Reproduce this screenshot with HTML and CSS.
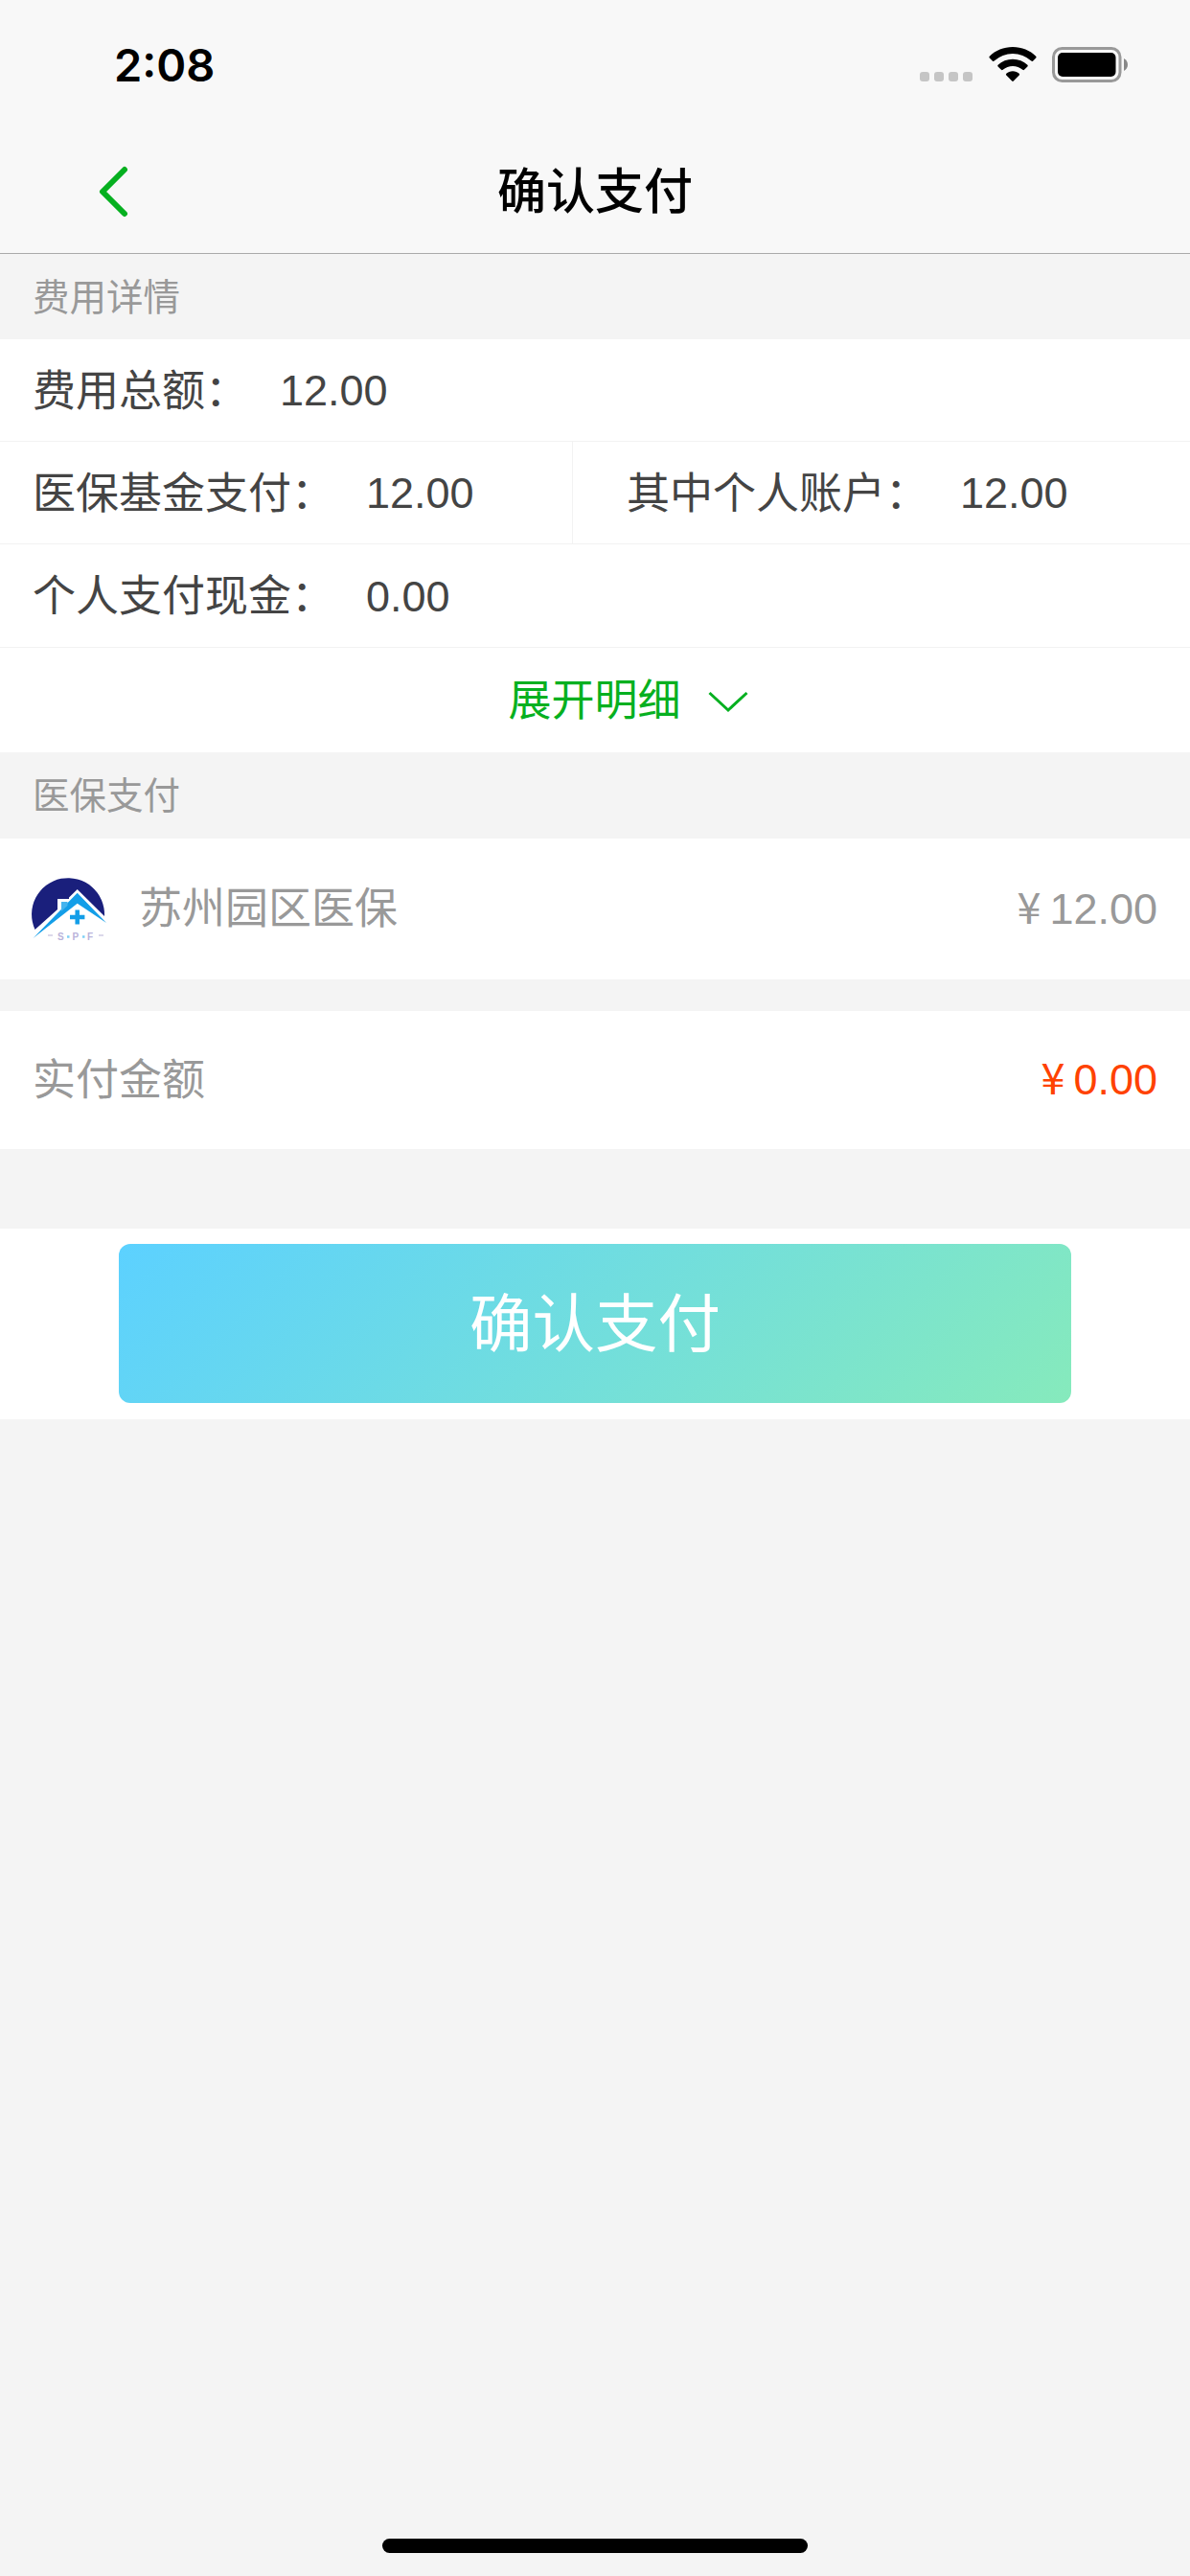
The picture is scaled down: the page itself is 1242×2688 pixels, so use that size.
FILE: index.html
```html
<!DOCTYPE html>
<html lang="zh-CN">
<head>
    <meta charset="UTF-8">
    <meta name="viewport" content="width=device-width, initial-scale=1.0">
    <title>确认支付</title>
    <link rel="stylesheet" href="styles.css">
</head>
<body>
    <header class="header">
        <div class="status-bar">
            <span class="time">2:08</span>
            <div class="status-icons">
                <div class="signal"><i></i><i></i><i></i><i></i></div>
                <svg class="wifi" width="50" height="38" viewBox="0 0 50 38">
                    <path d="M25 0C34.500 0 43 3.600 49.200 9.700Q50 10.600 49.200 11.500L46 14.700Q45.200 15.400 44.300 14.600A28.500 28.500 0 0 0 5.700 14.600Q4.800 15.400 4 14.700L.8 11.500Q0 10.600.8 9.700C7 3.600 15.500 0 25 0Z"/>
                    <path d="M25 12.800C31 12.800 36.300 15 40.400 18.800Q41.200 19.600 40.400 20.500L37 23.800Q36.200 24.600 35.300 23.800A15.800 15.800 0 0 0 14.700 23.800Q13.800 24.600 13 23.800L9.600 20.500Q8.800 19.600 9.600 18.800C13.700 15 19 12.800 25 12.800Z"/>
                    <path d="M25 25.300C27.700 25.300 29.900 26.200 31.700 27.700Q32.500 28.500 31.700 29.400L25.800 35.600Q25 36.400 24.200 35.600L18.300 29.400Q17.500 28.500 18.300 27.700C20.100 26.200 22.300 25.300 25 25.300Z"/>
                </svg>
                <svg class="battery" width="80" height="38" viewBox="0 0 80 38">
                    <rect x="1.500" y="1.500" width="69.500" height="34" rx="9" fill="none" stroke="#999" stroke-width="3"/>
                    <rect x="6" y="6" width="60.500" height="25" rx="5"/>
                    <path d="M75 12C80.300 14.500 80.300 22.500 75 25Z" fill="#888"/>
                </svg>
            </div>
        </div>
        <div class="nav-bar">
            <svg class="back" width="32" height="54" viewBox="0 0 32 54">
                <path d="M27 4L4 27L27 50"/>
            </svg>
            <h1>确认支付</h1>
        </div>
    </header>

    <h2 class="section-title">费用详情</h2>
    <div class="fee-list">
        <div class="fee-row">
            <span class="label">费用总额：</span><span class="value">12.00</span>
        </div>
        <div class="fee-row split">
            <div class="cell">
                <span class="label">医保基金支付：</span><span class="value">12.00</span>
            </div>
            <div class="cell">
                <span class="label">其中个人账户：</span><span class="value">12.00</span>
            </div>
        </div>
        <div class="fee-row">
            <span class="label">个人支付现金：</span><span class="value">0.00</span>
        </div>
        <div class="expand">
            <span>展开明细</span>
            <svg width="42" height="24" viewBox="0 0 42 24">
                <path d="M1.500 2L21 20L40.500 2"/>
            </svg>
        </div>
    </div>

    <h2 class="section-title insurance-title">医保支付</h2>
    <div class="pay-row insurance">
        <svg class="logo" width="80" height="70" viewBox="0 0 80 70">
            <path d="M4.500 56A38 38 0 1 1 77 42L48.700 14L40 22.500V24H28V35Z" fill="#1a1f7c"/>
            <path d="M2.500 65L48.700 17.700L79 49L48.700 28.700Z" fill="#139ee8"/>
            <path d="M32 27H38.500V31L32 37Z" fill="#45b4ee"/>
            <path d="M48.700 35.500V50.500M41 43H56.400" stroke="#139ee8" stroke-width="4.500"/>
            <path d="M18 62H23M71 62H76" stroke="#cfcbe4" stroke-width="1.500"/>
            <path d="M38 63.500H40.500M54 63.500H56.500" stroke="#7fd0f5" stroke-width="2.500"/>
            <text x="28" y="67.300">S</text>
            <text x="43.500" y="67.300">P</text>
            <text x="59" y="67.300">F</text>
        </svg>
        <span class="name">苏州园区医保</span>
        <span class="amount"><span class="yen">¥</span>12.00</span>
    </div>
    <div class="pay-row actual">
        <span class="name">实付金额</span>
        <span class="amount red"><span class="yen">¥</span>0.00</span>
    </div>

    <div class="submit">
        <button class="submit-btn">确认支付</button>
    </div>

    <div class="home-indicator"></div>
</body>
</html>
```

FILE: styles.css
```css
* {
    margin: 0;
    padding: 0;
    box-sizing: border-box;
}

body {
    display: flex;
    flex-direction: column;
    min-height: 100vh;
    background: #f4f4f4;
    color: #444;
    font-family: "Liberation Sans", "Noto Sans CJK SC", sans-serif;
    font-size: 45px;
}

.header {
    height: 265px;
    background: #f8f8f8;
    border-bottom: 1px solid #aaa;
    color: #000;
}

.status-bar {
    display: flex;
    justify-content: space-between;
    height: 132px;
    padding: 49px 64px 0 119px;
}

.time {
    font-family: Inter, sans-serif;
    font-size: 47px;
    font-weight: 600;
    line-height: 38px;
}

.status-icons {
    display: flex;
    align-items: flex-start;
}

.signal {
    display: flex;
    gap: 5px;
    margin: 26px 17px 0 0;
}

.signal i {
    width: 10px;
    height: 10px;
    border-radius: 3px;
    background: #c5c5c5;
}

.wifi {
    margin-right: 16px;
}

.nav-bar {
    display: grid;
    grid-template-columns: 1fr auto 1fr;
    align-items: center;
    height: 132px;
    padding: 3px 103px 0;
}

.nav-bar h1 {
    padding-top: 2px;
    font-size: 51px;
    font-weight: 500;
    line-height: 60px;
}

.back path {
    fill: none;
    stroke: #06b020;
    stroke-width: 6;
    stroke-linecap: round;
    stroke-linejoin: round;
}

.section-title {
    height: 89px;
    padding-left: 34px;
    color: #999;
    font-size: 38.5px;
    font-weight: 400;
    line-height: 91px;
}

.insurance-title {
    height: 90px;
}

.fee-list {
    height: 431px;
    background: #fff;
}

.fee-row {
    display: flex;
    align-items: center;
    height: 107px;
    padding-left: 34px;
    border-bottom: 1px solid #f2f2f2;
}

.fee-row:nth-child(3) {
    height: 108px;
}

.split {
    align-items: stretch;
    padding-left: 0;
}

.cell {
    display: flex;
    align-items: center;
    flex: 1;
    padding-left: 56px;
}

.cell:first-child {
    flex: 0 0 598px;
    padding-left: 34px;
    border-right: 1px solid #f2f2f2;
}

.label {
    margin: 0 33px 6px 0;
}

.value {
    margin-top: 2px;
}

.expand {
    display: flex;
    align-items: center;
    justify-content: center;
    gap: 28px;
    height: 109px;
    padding-left: 69px;
    color: #06b020;
}

.expand span {
    margin-bottom: 6px;
}

.expand svg {
    margin-top: 4px;
}

.expand path {
    fill: none;
    stroke: #06b020;
    stroke-width: 3;
}

.pay-row {
    display: flex;
    align-items: center;
    padding: 0 34px;
    background: #fff;
    color: #999;
}

.insurance {
    height: 147px;
    padding-left: 32px;
}

.actual {
    height: 144px;
    margin-top: 33px;
}

.logo {
    margin-right: 33px;
}

.logo text {
    fill: #b9b3da;
    font-size: 10px;
    font-weight: bold;
}

.name {
    margin-bottom: 8px;
}

.amount {
    margin: 0 0 9px auto;
}

.yen {
    margin-right: 9px;
    font-family: "Noto Sans CJK SC", sans-serif;
}

.red {
    color: #ff4200;
}

.submit {
    height: 199px;
    margin-top: 83px;
    padding: 16px 124px 0;
    background: #fff;
}

.submit-btn {
    display: block;
    width: 100%;
    height: 166px;
    padding-bottom: 10px;
    border: none;
    border-radius: 12px;
    background: linear-gradient(135deg, #5cd1ff, #86eabc);
    color: #fff;
    font-family: inherit;
    font-size: 65.5px;
}

.home-indicator {
    width: 444px;
    height: 15px;
    margin: auto auto 24px;
    border-radius: 8px;
    background: #000;
}
```
